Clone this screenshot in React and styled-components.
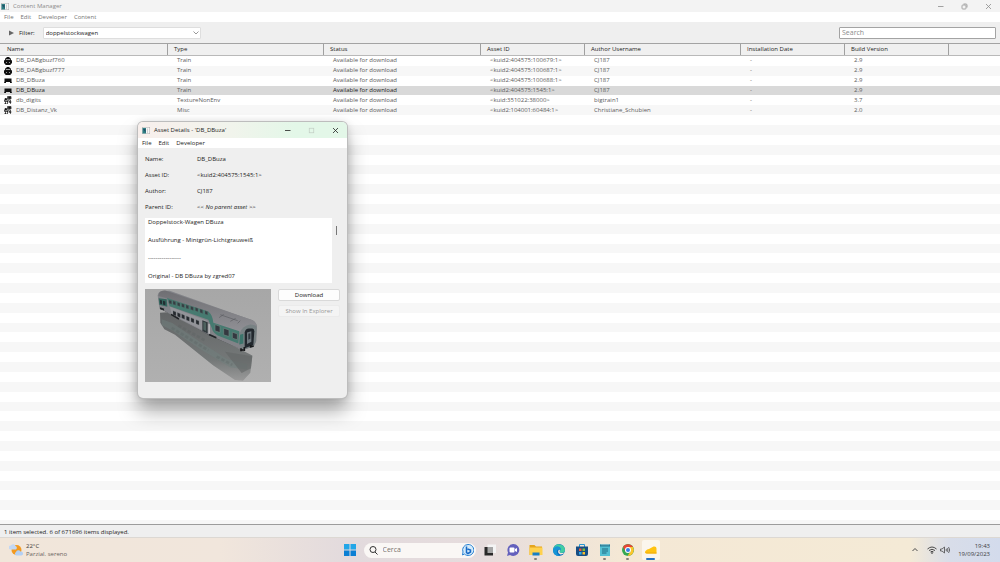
import styled, { createGlobalStyle, css } from "styled-components";

const GlobalStyle = createGlobalStyle`
  * {
    box-sizing: border-box;
  }
  body {
    margin: 0;
    overflow: hidden;
    background: #fff;
    color: #1c1c1c;
    font-family: "Open Sans", "Noto Sans", sans-serif;
    font-size: 6px;
    line-height: 10px;
  }
  button, input, select, textarea {
    font: inherit;
    color: inherit;
  }
`;

const columns =
  "167fr 156fr 157fr 104fr 156fr 104fr 104fr 52fr";

const Desktop = styled.div`
  display: flex;
  flex-direction: column;
  height: 100vh;
`;

const TitleBar = styled.header`
  display: flex;
  align-items: center;
  height: ${(props) => (props.$dialog ? "16px" : "12px")};
  padding-left: ${(props) => (props.$dialog ? "4px" : "1px")};
  background: ${(props) =>
    props.$dialog ? "linear-gradient(90deg, #f8efec, #f1f4ec 45%, #e3f7e8 75%)" : "#f3f3f3"};
  color: ${(props) => (props.$dialog ? "#222" : "#8c8c8c")};
`;

const Title = styled.h1`
  flex: 1;
  margin: 0 0 0 4px;
  font-size: 6px;
  font-weight: 400;
`;

const WindowButton = styled.button`
  display: grid;
  place-items: center;
  width: 24px;
  height: 100%;
  padding: 0;
  border: 0;
  background: none;
  color: ${(props) => (props.disabled ? "#c3cfc5" : "inherit")};
  svg {
    width: 7px;
    height: 7px;
    fill: none;
    stroke: currentColor;
  }
`;

const MenuBar = styled.nav`
  display: flex;
  align-items: center;
  gap: 7px;
  height: 10px;
  padding-left: 4px;
  background: #fff;
  color: ${(props) => (props.$dim ? "#757575" : "#1c1c1c")};
`;

const MenuButton = styled.button`
  padding: 0;
  border: 0;
  background: none;
`;

const FilterBar = styled.div`
  display: flex;
  align-items: center;
  height: 21px;
  padding: 0 4px 0 9px;
  background: #efefef;
`;

const Expander = styled.button`
  display: flex;
  padding: 0;
  border: 0;
  background: none;
  svg {
    width: 5px;
    height: 6px;
    fill: #666;
  }
`;

const FilterLabel = styled.label`
  margin-left: 5px;
`;

const SelectBox = styled.div`
  display: grid;
  align-items: center;
  width: 158px;
  margin: 0 auto 0 8px;
  > * {
    grid-area: 1 / 1;
  }
  svg {
    justify-self: end;
    width: 6px;
    height: 4px;
    margin-right: 2px;
    fill: none;
    stroke: #777;
    pointer-events: none;
  }
`;

const FilterSelect = styled.select`
  width: 100%;
  height: 12px;
  padding: 0 2px;
  border: 1px solid #dedede;
  border-radius: 1px;
  background: #fff;
  line-height: 10px;
  appearance: none;
`;

const SearchInput = styled.input`
  width: 157px;
  height: 12px;
  padding: 0 2px;
  border: 1px solid #a3a3a3;
  border-radius: 1px;
  background: #fff;
  font-size: 7px;
  &::placeholder {
    color: #8b8b8b;
    opacity: 1;
  }
`;

const AssetTable = styled.table`
  display: flex;
  flex: 1;
  flex-direction: column;
  min-height: 0;
  border-bottom: 4px solid #f7f7f7;
`;

const TableHead = styled.thead`
  display: block;
  border-top: 1px solid #a3a3a3;
  border-bottom: 1px solid #b9b9b9;
  background: #f0f0f0;
`;

const TableBody = styled.tbody`
  display: grid;
  flex: 1;
  grid-auto-rows: minmax(0, 1fr);
  min-height: 0;
`;

const HeadRow = styled.tr`
  display: grid;
  grid-template-columns: ${columns};
`;

const HeadCell = styled.th`
  height: 11px;
  padding: 0 6px;
  border-left: 1px solid ${(props) => (props.$first ? "transparent" : "#a0a0a0")};
  font-weight: 400;
  text-align: left;
`;

const Row = styled.tr`
  display: grid;
  grid-template-columns: ${columns};
  align-items: center;
  color: #5c5c5c;
  line-height: 9px;
  &:nth-child(even) {
    background: #f7f7f7;
  }
  ${(props) =>
    props.$selected &&
    css`
      && {
        background: #d9d9d9;
      }
    `}
`;

const Cell = styled.td`
  display: flex;
  align-items: center;
  gap: 4px;
  height: 9px;
  padding: 0 0 0 ${(props) => (props.$first ? "4px" : "10px")};
  color: ${(props) => (props.$strong ? "#1a1a1a" : "inherit")};
  white-space: nowrap;
  svg {
    width: 8px;
    height: 8px;
    color: #111;
  }
`;

const StatusBar = styled.footer`
  height: 14px;
  padding: 2px 4px;
  border-top: 1px solid #9c9c9c;
  border-bottom: 1px solid #dcd8d3;
  background: #efefef;
`;

const Dialog = styled.section`
  position: absolute;
  top: 122px;
  left: 138px;
  width: 209px;
  height: 276px;
  overflow: hidden;
  border-radius: 5px;
  background: #efefef;
  box-shadow: 0 0 0 1px #bdbdbd, 0 13px 20px rgba(0, 0, 0, 0.34),
    0 1px 8px rgba(0, 0, 0, 0.16);
`;

const DialogBody = styled.div`
  padding: 3px 7px 0;
`;

const Fields = styled.dl`
  display: grid;
  grid-template-columns: 52px 1fr;
  margin: 0 0 3px;
  line-height: 16px;
  dd {
    margin: 0;
  }
`;

const Description = styled.textarea`
  display: block;
  width: 187px;
  height: 65px;
  padding: 0 3px;
  border: 0;
  background: #fff;
  line-height: 9px;
  resize: none;
  overflow: hidden;
`;

const DescriptionRow = styled.div`
  display: flex;
  gap: 4px;
`;

const ScrollThumb = styled.div`
  width: 1px;
  height: 9px;
  margin-top: 8px;
  background: #777;
`;

const PreviewRow = styled.div`
  display: flex;
  gap: 7px;
  margin-top: 6px;
  > svg {
    width: 126px;
    height: 93px;
  }
`;

const Actions = styled.div`
  display: flex;
  flex: 1;
  flex-direction: column;
  gap: 4px;
`;

const ActionButton = styled.button`
  height: 12px;
  width: 62px;
  padding: 0;
  border: 1px solid ${(props) => (props.disabled ? "#ebebeb" : "#d9d9d9")};
  border-radius: 2px;
  background: ${(props) => (props.disabled ? "#f4f4f4" : "#fdfdfd")};
  color: ${(props) => (props.disabled ? "#979797" : "#1a1a1a")};
  line-height: 10px;
`;

const Taskbar = styled.footer`
  display: grid;
  grid-template-columns: 1fr auto 1fr;
  align-items: center;
  height: 24px;
  background: linear-gradient(
    90deg,
    #f1e6da,
    #f1e6dc 22%,
    #e2dadd 35%,
    #e6dcdd 48%,
    #f4e8d5 62%,
    #f4ead6 91%,
    #d8dde9 95%,
    #d3dbec
  );
`;

const Weather = styled.button`
  display: flex;
  align-items: center;
  gap: 3px;
  justify-self: start;
  padding: 0 0 0 9px;
  border: 0;
  background: none;
  color: #6b6560;
  line-height: 8px;
  text-align: left;
  svg {
    width: 14px;
    height: 14px;
  }
  b {
    display: block;
    color: #3c3835;
    font-weight: 400;
  }
`;

const Apps = styled.div`
  display: flex;
  align-items: center;
  gap: 5px;
`;

const AppButton = styled.button`
  display: flex;
  flex-direction: column;
  align-items: center;
  justify-content: flex-end;
  width: 18px;
  height: 20px;
  padding: 0;
  border: 0;
  border-radius: 2px;
  background: ${(props) => (props.$active ? "#fbf6ed" : "none")};
  svg {
    width: 14px;
    height: 14px;
  }
  &::after {
    content: "";
    width: ${(props) => (props.$active ? "9px" : "3px")};
    height: 2px;
    margin-top: 1px;
    border-radius: 1px;
    background: ${(props) =>
      props.$active ? "#2271c4" : props.$running ? "#858079" : "transparent"};
  }
`;

const TaskSearch = styled.label`
  display: flex;
  align-items: center;
  gap: 5px;
  width: 112px;
  height: 15px;
  padding: 0 2px 0 5px;
  border-radius: 8px;
  background: #faf7f5;
  svg {
    width: 9px;
    height: 9px;
  }
  svg:last-child {
    width: 12px;
    height: 12px;
  }
  input {
    flex: 1;
    min-width: 0;
    padding: 0;
    border: 0;
    outline: 0;
    background: none;
    font-size: 7px;
  }
  input::placeholder {
    color: #77716e;
    opacity: 1;
  }
`;

const Tray = styled.div`
  display: flex;
  align-items: center;
  justify-self: end;
  padding-right: 10px;
  svg {
    width: 10px;
    height: 10px;
    fill: none;
    stroke: #4a4a4a;
  }
  svg:first-child {
    width: 6px;
    margin-right: 9px;
  }
  svg + svg {
    margin-right: 3px;
  }
`;

const Clock = styled.time`
  margin-left: 5px;
  color: #3d3d42;
  line-height: 8px;
  text-align: right;
`;

const AppLogo = () => (
  <svg width="8" height="7" viewBox="0 0 16 14" aria-hidden="true">
    <rect x="0.5" y="0.5" width="15" height="13" fill="#f7f7f7" stroke="#aaa" />
    <path d="M1 2h7v11H1z" fill="#2f7f83" />
    <path d="M2 4l5 7V4z" fill="#234e66" />
    <path d="M11 3v9" stroke="#aaa" />
  </svg>
);

const WindowControls = ({ dialog }) => (
  <>
    <WindowButton aria-label="Minimize">
      <svg viewBox="0 0 14 14">
        <path d="M2 7h11" strokeWidth="1.6" />
      </svg>
    </WindowButton>
    <WindowButton aria-label="Maximize" disabled={dialog}>
      <svg viewBox="0 0 14 14" strokeWidth="1.5">
        {dialog ? (
          <rect x="2.5" y="2.5" width="9" height="9" />
        ) : (
          <>
            <rect x="2" y="4" width="8" height="8" rx="1.5" />
            <path d="M5 2h5q2 0 2 2v5" />
          </>
        )}
      </svg>
    </WindowButton>
    <WindowButton aria-label="Close">
      <svg viewBox="0 0 14 14" strokeWidth="1.6">
        <path d="M2 2l10 10M12 2L2 12" />
      </svg>
    </WindowButton>
  </>
);

const EngineIcon = () => (
  <svg viewBox="0 0 16 16" fill="currentColor" aria-hidden="true">
    <path d="M5 0h6v2h2l1 4 2 1v6h-2l-1 3H3l-1-3H0V7l2-1 1-4h2z" />
    <path d="M4 5h8M4 11h2M10 11h2" stroke="#fff" strokeWidth="1.2" />
  </svg>
);

const WagonIcon = () => (
  <svg viewBox="0 0 16 16" fill="currentColor" aria-hidden="true">
    <path d="M1 3h14v6l1 3h-4v-2H4v2H0l1-3z" />
  </svg>
);

const SceneryIcon = () => (
  <svg viewBox="0 0 16 16" aria-hidden="true" stroke="currentColor" fill="none" strokeWidth="1.4">
    <path d="M7 1h7v5H7zM10 6v3M1 8h7v3H1zM3 11v5M7 10v6M10 9l3 6M13 8v7M1 15h4M9 12h6" />
    <path d="M9 2h4v3H9zM2 5h3v3H2z" fill="currentColor" />
  </svg>
);

const icons = { engine: EngineIcon, wagon: WagonIcon, scenery: SceneryIcon };

const headings = [
  "Name",
  "Type",
  "Status",
  "Asset ID",
  "Author Username",
  "Installation Date",
  "Build Version",
  "",
];

const assets = [
  ["engine", "DB_DABgbuzf760", "Train", "<kuid2:404575:100679:1>", "CJ187", "2.9"],
  ["engine", "DB_DABgbuzf777", "Train", "<kuid2:404575:100687:1>", "CJ187", "2.9"],
  ["wagon", "DB_DBuza", "Train", "<kuid2:404575:100688:1>", "CJ187", "2.9"],
  ["wagon", "DB_DBuza", "Train", "<kuid2:404575:1545:1>", "CJ187", "2.9"],
  ["scenery", "db_digits", "TextureNonEnv", "<kuid:351022:38000>", "bigtrain1", "3.7"],
  ["scenery", "DB_Distanz_Vk", "Misc", "<kuid2:104001:60484:1>", "Christiane_Schubien", "2.0"],
];

const selectedIndex = 3;
const emptyRows = Array.from({ length: 41 }, (_, i) => i);

const description = `Doppelstock-Wagen DBuza

Ausführung - Mintgrün-Lichtgrauweiß

-----------------

Original - DB DBuza by zgred07`;

const upperWindows = [
  [72, 33], [84, 36], [97, 40], [110, 44], [123, 48], [137, 52], [151, 56], [165, 61], [180, 66],
];
const lowerWindows = [
  [84, 66], [97, 71], [110, 76], [124, 82], [138, 87], [153, 93],
];

const TrainPreview = () => (
  <svg viewBox="0 0 378 282" preserveAspectRatio="none" role="img" aria-label="DB_DBuza">
    <defs>
      <linearGradient id="floor" x1="0" y1="0" x2="0" y2="1">
        <stop offset="0" stopColor="#a7a7a7" />
        <stop offset="1" stopColor="#b0b0b0" />
      </linearGradient>
      <linearGradient id="roof" x1="0" y1="0" x2="0" y2="1">
        <stop offset="0" stopColor="#6f6f73" />
        <stop offset="1" stopColor="#919196" />
      </linearGradient>
      <linearGradient id="mirror" x1="0" y1="0" x2="0" y2="1">
        <stop offset="0" stopColor="#636566" />
        <stop offset="0.7" stopColor="#747878" />
        <stop offset="1" stopColor="#999" />
      </linearGradient>
    </defs>
    <rect width="378" height="282" fill="url(#floor)" />
    <path d="M45 72L76 70L194 136L322 202L316 254L294 278L270 276L205 232L90 139L58 122L46 102z" fill="url(#mirror)" />
    <path d="M50 92L82 103L160 157L246 212L308 228L306 244L256 237L165 182L82 126L50 110z" fill="#6f807d" opacity="0.5" />
    <path d="M80 118L190 186M100 111L180 156M215 205L262 230" stroke="#545c5b" strokeWidth="8" strokeDasharray="10 6" opacity="0.25" />
    <path d="M240 190L322 204L318 240L290 255z" fill="#626666" opacity="0.6" />
    <path d="M45 61L78 76L190 139L288 183L292 186L320 174L318 168L196 132L60 54z" fill="#303235" />
    <path d="M38 20Q39 7 54 5L74 5L310 90Q333 96 336 111L334 158L326 176L290 184L194 140L78 78L43 57z" fill="#828388" />
    <path d="M42 13Q47 4 63 5L310 90Q332 95 336 112Q303 104 286 132L205 105L190 79L65 28L40 21z" fill="url(#roof)" />
    <path d="M41 28L65 31L67 54L43 48z" fill="#34665e" />
    <path d="M45 33l6 2v11l-6-2zM54 36l7 2v11l-7-2z" fill="#232e32" />
    <path d="M66 27L190 68Q203 79 205 102L283 128L280 165L218 141Q202 130 201 120L190 93L74 52z" fill="#467a70" />
    <path d="M75 54L187 96L190 134L80 77z" fill="#939499" />
    {upperWindows.map(([x, y]) => (
      <path key={x} d={`M${x} ${y}l8 3v10l-8-3z`} fill="#343e43" stroke="#5c6d69" />
    ))}
    {lowerWindows.map(([x, y]) => (
      <path key={x} d={`M${x} ${y}l9 4v12l-9-4z`} fill="#25292e" stroke="#73777a" />
    ))}
    <path d="M172 95l16 6v34l-16-8z" fill="#333b3e" />
    <path d="M175 99l8 3v25l-8-4z" fill="#4d615e" />
    <path d="M190 105l5 2v30l-5-2z" fill="#b5b5b8" />
    <path d="M210 108l15 5v19l-15-5zM236 119l16 5v20l-16-5zM262 131l15 5v18l-15-5z" fill="#343940" stroke="#6f8580" strokeWidth="2" />
    <path d="M285 133Q292 112 316 108Q334 108 335 118L332 160L325 175L291 184L282 166z" fill="#788284" />
    <path d="M285 139l10-3v29l-12 3z" fill="#3c756c" />
    <path d="M299 132q2-12 13-12h10q6 0 6 8l-3 42-26 10z" fill="#22282e" />
    <path d="M306 132l13-4v32l-13 7z" fill="#6f797f" />
    <path d="M310 136l6-2v17l-6 3z" fill="#313940" />
    <path d="M288 180v8M298 176v12M317 170v8M286 187l9-3M315 176l11-3" stroke="#17191b" strokeWidth="5" />
    <path d="M222 87l14-10M226 78l52 18M256 98l16-9M278 104l8-8" stroke="#5d5e62" strokeWidth="2" fill="none" />
    <path d="M45 58l12 4M78 77l24 14M192 138l22 10" stroke="#202326" strokeWidth="5" />
  </svg>
);

const AssetDialog = () => (
  <Dialog role="dialog" aria-label="Asset Details">
    <TitleBar $dialog>
      <AppLogo />
      <Title as="h2">Asset Details - 'DB_DBuza'</Title>
      <WindowControls dialog />
    </TitleBar>
    <MenuBar>
      <MenuButton>File</MenuButton>
      <MenuButton>Edit</MenuButton>
      <MenuButton>Developer</MenuButton>
    </MenuBar>
    <DialogBody>
      <Fields>
        <dt>Name:</dt>
        <dd>DB_DBuza</dd>
        <dt>Asset ID:</dt>
        <dd>{"<kuid2:404575:1545:1>"}</dd>
        <dt>Author:</dt>
        <dd>CJ187</dd>
        <dt>Parent ID:</dt>
        <dd>
          {"<< "}
          <em>No parent asset</em>
          {" >>"}
        </dd>
      </Fields>
      <DescriptionRow>
        <Description aria-label="Description" readOnly value={description} />
        <ScrollThumb />
      </DescriptionRow>
      <PreviewRow>
        <TrainPreview />
        <Actions>
          <ActionButton>Download</ActionButton>
          <ActionButton disabled>Show In Explorer</ActionButton>
        </Actions>
      </PreviewRow>
    </DialogBody>
  </Dialog>
);

const WeatherIcon = () => (
  <svg viewBox="0 0 28 28" aria-hidden="true">
    <circle cx="15" cy="14" r="10" fill="#f39a20" />
    <path d="M3 13a4 4 0 0 1 1-8 5 5 0 0 1 9 1 4 4 0 0 1 1 7z" fill="#c2d8f5" />
    <path d="M14 25a4 4 0 0 1 0-7 5 5 0 0 1 9-1 4 4 0 0 1 2 8z" fill="#b3d0f5" />
  </svg>
);

const StartIcon = () => (
  <svg viewBox="0 0 28 28">
    <path d="M2 2h11v11H2zM15 2h11v11H15z" fill="#22a6e8" />
    <path d="M2 15h11v11H2zM15 15h11v11H15z" fill="#0b7fd4" />
  </svg>
);

const TaskViewIcon = () => (
  <svg viewBox="0 0 28 28">
    <rect x="9" y="3" width="17" height="17" fill="#f4f4f4" />
    <rect x="3" y="8" width="17" height="17" fill="#292929" />
    <path d="M9 8h11v12H9z" fill="#a5a5a5" />
  </svg>
);

const ChatIcon = () => (
  <svg viewBox="0 0 28 28">
    <path d="M14 2a12 12 0 1 1-6 22l-6 2 2-7A12 12 0 0 1 14 2z" fill="#6461bd" />
    <rect x="7" y="9" width="10" height="10" rx="2" fill="#fff" />
    <path d="M18 12l4-2v8l-4-2z" fill="#fff" />
  </svg>
);

const FolderIcon = () => (
  <svg viewBox="0 0 28 28">
    <path d="M1 4h10l3 3h12v17H1z" fill="#e5a51d" />
    <path d="M1 9h26v15H1z" fill="#ffd14d" />
    <path d="M7 19h14v6H7z" fill="#1a7fc4" />
  </svg>
);

const EdgeIcon = () => (
  <svg viewBox="0 0 28 28">
    <circle cx="14" cy="14" r="12" fill="#0c6fc0" />
    <path d="M3 10A12 12 0 0 1 26 14q0 6-8 6-4-1-2-4 3-8-4-8-6 0-9 5z" fill="#42cda2" />
    <path d="M2 14q3-9 11-7 6 2 4 8-4-4-7 0-2 5 5 11Q2 26 2 14z" fill="#1795d6" />
    <path d="M14 13q-5 6 3 10 5 0 8-4-6 2-9 0-2-1 0-4z" fill="#f3e8da" />
  </svg>
);

const StoreIcon = () => (
  <svg viewBox="0 0 28 28">
    <path d="M9 8V3h10v5" fill="none" stroke="#2597d4" strokeWidth="2" />
    <path d="M2 7h24v15q0 4-4 4H6q-4 0-4-4z" fill="#174d83" />
    <path d="M8 11h5v5H8z" fill="#ef5939" />
    <path d="M15 11h5v5h-5z" fill="#84bd35" />
    <path d="M8 18h5v5H8z" fill="#32a9e7" />
    <path d="M15 18h5v5h-5z" fill="#f9bd2c" />
  </svg>
);

const NotepadIcon = () => (
  <svg viewBox="0 0 28 28">
    <path d="M4 3h20v23H4z" fill="#53bfd2" />
    <path d="M4 3h20v4H4z" fill="#257b96" />
    <path d="M8 12h12M8 16h12M8 20h9" stroke="#216b83" strokeWidth="2" />
    <path d="M8 1v4M12 1v4M16 1v4M20 1v4" stroke="#d4eff3" />
  </svg>
);

const ChromeIcon = () => (
  <svg viewBox="0 0 28 28">
    <circle cx="14" cy="14" r="12" fill="#35a853" />
    <path d="M4 8a12 12 0 0 1 20 0H14l-5 9z" fill="#e84535" />
    <path d="M14 8h10a12 12 0 0 1-11 18l6-9z" fill="#fcc52a" />
    <circle cx="14" cy="14" r="6" fill="#fff" />
    <circle cx="14" cy="14" r="4" fill="#367ee8" />
  </svg>
);

const TrainzIcon = () => (
  <svg viewBox="0 0 28 28">
    <path d="M2 19q0-5 8-7l9-5q6-1 6 4v10H6q-4 0-4-2z" fill="#ffc313" />
    <path d="M2 19h23v2H5z" fill="#f0ab0e" />
  </svg>
);

const taskApps = [
  { name: "Task view", Icon: TaskViewIcon },
  { name: "Chat", Icon: ChatIcon },
  { name: "File Explorer", Icon: FolderIcon, running: true },
  { name: "Edge", Icon: EdgeIcon },
  { name: "Store", Icon: StoreIcon },
  { name: "Notepad", Icon: NotepadIcon, running: true },
  { name: "Chrome", Icon: ChromeIcon, running: true },
  { name: "Trainz", Icon: TrainzIcon, active: true },
];

const DesktopTaskbar = () => (
  <Taskbar>
    <Weather>
      <WeatherIcon />
      <span>
        <b>22°C</b>
        Parzial. sereno
      </span>
    </Weather>
    <Apps>
      <AppButton aria-label="Start">
        <StartIcon />
      </AppButton>
      <TaskSearch>
        <svg viewBox="0 0 18 18" fill="none" stroke="#333" strokeWidth="2">
          <circle cx="8" cy="7" r="6" />
          <path d="M12 12l5 5" />
        </svg>
        <input type="search" placeholder="Cerca" aria-label="Cerca" />
        <svg viewBox="0 0 24 24">
          <path d="M12 1a11 11 0 1 1-7 19l-4 2 1-6A11 11 0 0 1 12 1z" fill="#d5ebfa" stroke="#2880d2" strokeWidth="2" />
          <path d="M9 5v12l3 2 5-3v-4l-6-2" fill="none" stroke="#1769c7" strokeWidth="3" />
        </svg>
      </TaskSearch>
      {taskApps.map(({ name, Icon, running, active }) => (
        <AppButton key={name} aria-label={name} $running={running} $active={active}>
          <Icon />
        </AppButton>
      ))}
    </Apps>
    <Tray>
      <svg viewBox="0 0 12 20" strokeWidth="2">
        <path d="M1 12l5-5 5 5" />
      </svg>
      <svg viewBox="0 0 20 20" strokeWidth="2">
        <path d="M1 8q9-8 18 0M4 11q6-5 12 0M7 14q3-3 6 0" />
        <circle cx="10" cy="16" r="1" />
      </svg>
      <svg viewBox="0 0 20 20" strokeWidth="1.6">
        <path d="M1 8h3l5-4v12l-5-4H1zM12 8q2 2 0 4M14 6q4 4 0 8M17 4q5 6 0 12" />
      </svg>
      <Clock>
        19:43
        <br />
        19/09/2023
      </Clock>
    </Tray>
  </Taskbar>
);

export default function App() {
  return (
    <Desktop>
      <GlobalStyle />
      <TitleBar>
        <AppLogo />
        <Title>Content Manager</Title>
        <WindowControls />
      </TitleBar>
      <MenuBar $dim>
        <MenuButton>File</MenuButton>
        <MenuButton>Edit</MenuButton>
        <MenuButton>Developer</MenuButton>
        <MenuButton>Content</MenuButton>
      </MenuBar>
      <FilterBar>
        <Expander aria-label="Expand filters">
          <svg viewBox="0 0 10 12">
            <path d="M0 1l10 5-10 5z" />
          </svg>
        </Expander>
        <FilterLabel htmlFor="filter">Filter:</FilterLabel>
        <SelectBox>
          <FilterSelect id="filter" defaultValue="doppelstockwagen">
            <option>doppelstockwagen</option>
          </FilterSelect>
          <svg viewBox="0 0 12 8" strokeWidth="1.5">
            <path d="M1 1l5 5 5-5" />
          </svg>
        </SelectBox>
        <SearchInput placeholder="Search" aria-label="Search" />
      </FilterBar>
      <AssetTable>
        <TableHead>
          <HeadRow>
            {headings.map((heading, i) => (
              <HeadCell key={heading} $first={i === 0}>
                {heading}
              </HeadCell>
            ))}
          </HeadRow>
        </TableHead>
        <TableBody>
          {assets.map(([kind, name, type, id, author, build], i) => {
            const Icon = icons[kind];
            const selected = i === selectedIndex;
            return (
              <Row key={id} $selected={selected}>
                <Cell $first $strong={selected}>
                  <Icon />
                  {name}
                </Cell>
                <Cell>{type}</Cell>
                <Cell $strong={selected}>Available for download</Cell>
                <Cell>{id}</Cell>
                <Cell>{author}</Cell>
                <Cell>-</Cell>
                <Cell>{build}</Cell>
              </Row>
            );
          })}
          {emptyRows.map((row) => (
            <Row key={row} aria-hidden="true" />
          ))}
        </TableBody>
      </AssetTable>
      <StatusBar>1 item selected. 6 of 671696 items displayed.</StatusBar>
      <DesktopTaskbar />
      <AssetDialog />
    </Desktop>
  );
}
